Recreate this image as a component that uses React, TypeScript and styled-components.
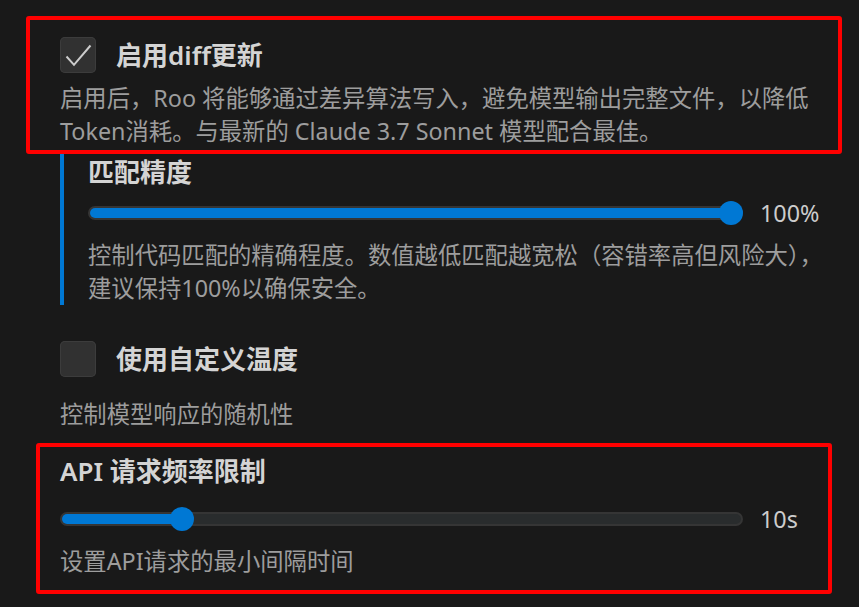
import React from "react";
import styled, { createGlobalStyle } from "styled-components";

const GlobalStyle = createGlobalStyle`
  html, body {
    margin: 0;
    padding: 0;
    background: #191919;
  }
  body {
    font-family: "Noto Sans", "Noto Sans CJK SC", sans-serif;
  }
`;

const Page = styled.div`
  position: relative;
  box-sizing: border-box;
  min-height: 607px;
  padding: 37px 17px 20px 60px;
`;

const Block = styled.section<{ $mt?: number }>`
  position: relative;
  margin-top: ${(p) => p.$mt ?? 0}px;
`;

const Highlight = styled.div<{ $t: number; $l: number; $r: number; $b: number }>`
  position: absolute;
  top: ${(p) => p.$t}px;
  left: ${(p) => p.$l}px;
  right: ${(p) => p.$r}px;
  bottom: ${(p) => p.$b}px;
  border: 4px solid #ff0000;
  border-radius: 3px;
  pointer-events: none;
`;

const SubSettings = styled.div`
  margin-top: 6px;
  border-left: 4px solid #0078d4;
  padding-left: 24px;
`;

const CheckRow = styled.label`
  display: flex;
  align-items: center;
  gap: 20px;
`;

const Box = styled.span`
  width: 36px;
  height: 36px;
  flex-shrink: 0;
  border-radius: 5px;
  background: #313131;
  box-shadow: inset 0 0 0 1px #3c3c3c;
  display: flex;
  align-items: center;
  justify-content: center;
`;

const Title = styled.div`
  font-size: 26px;
  font-weight: 600;
  line-height: 36px;
  color: #d4d4d4;
`;

const Desc = styled.p<{ $mt: number }>`
  margin: ${(p) => p.$mt}px 0 0;
  font-size: 23.33px;
  line-height: 33px;
  color: #9d9d9d;
`;

const SliderRow = styled.div<{ $mt: number }>`
  display: flex;
  align-items: center;
  height: 24px;
  margin-top: ${(p) => p.$mt}px;
`;

const Track = styled.div`
  position: relative;
  flex: 1;
  height: 14px;
  box-sizing: border-box;
  border: 2px solid #353535;
  border-radius: 7px;
  background: #292c2d;
`;

const Fill = styled.div`
  position: absolute;
  left: 0;
  top: 0;
  bottom: 0;
  border-radius: 5px;
  background: #0078d4;
`;

const Thumb = styled.div`
  position: absolute;
  top: 50%;
  width: 24px;
  height: 24px;
  margin: -12px 0 0 -12px;
  border-radius: 50%;
  background: #0078d4;
`;

const Value = styled.span`
  width: 82px;
  margin-left: 17px;
  flex-shrink: 0;
  font-size: 23.33px;
  line-height: 24px;
  color: #cccccc;
`;

function Checkbox({ checked, label }: { checked: boolean; label: string }) {
  return (
    <CheckRow>
      <Box>
        {checked && (
          <svg width="36" height="36" viewBox="0 0 36 36" fill="none">
            <polyline
              points="6.5,19.5 14,27.8 30.5,8.5"
              stroke="#cccccc"
              strokeWidth="2"
              strokeLinejoin="miter"
            />
          </svg>
        )}
      </Box>
      <Title>{label}</Title>
    </CheckRow>
  );
}

function Slider({
  value,
  min,
  max,
  label,
  mt,
}: {
  value: number;
  min: number;
  max: number;
  label: string;
  mt: number;
}) {
  const r = (value - min) / (max - min);
  const pos = `calc(10px + ${r} * (100% - 20px))`;
  return (
    <SliderRow $mt={mt}>
      <Track>
        <Fill style={{ width: r >= 1 ? "100%" : pos }} />
        <Thumb style={{ left: pos }} />
      </Track>
      <Value>{label}</Value>
    </SliderRow>
  );
}

export default function App() {
  return (
    <>
      <GlobalStyle />
      <Page>
        <Block>
          <Checkbox checked label="启用diff更新" />
          <Desc $mt={9}>
            启用后，Roo 将能够通过差异算法写入，避免模型输出完整文件，以降低Token消耗。与最新的 Claude 3.7 Sonnet 模型配合最佳。
          </Desc>
          <Highlight $t={-21} $l={-34} $r={0} $b={-6} />
        </Block>

        <SubSettings>
          <Title>匹配精度</Title>
          <Slider value={100} min={0} max={100} label="100%" mt={11} />
          <Desc $mt={14}>
            控制代码匹配的精确程度。数值越低匹配越宽松（容错率高但风险大），建议保持100%以确保安全。
          </Desc>
        </SubSettings>

        <Block $mt={36}>
          <Checkbox checked={false} label="使用自定义温度" />
          <Desc $mt={21}>控制模型响应的随机性</Desc>
        </Block>

        <Block $mt={22}>
          <Title>API 请求频率限制</Title>
          <Slider value={10} min={0} max={60} label="10s" mt={18} />
          <Desc $mt={14}>设置API请求的最小间隔时间</Desc>
          <Highlight $t={-10} $l={-24} $r={10} $b={-16} />
        </Block>
      </Page>
    </>
  );
}
